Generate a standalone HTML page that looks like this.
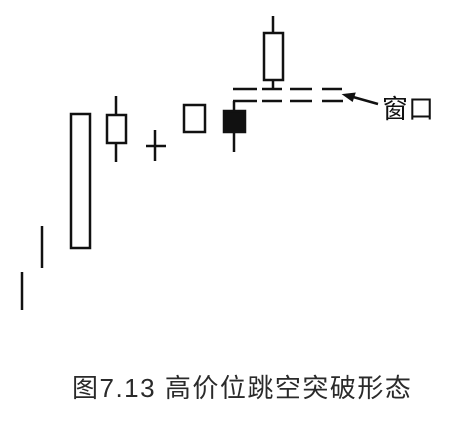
<!DOCTYPE html>
<html><head><meta charset="utf-8"><style>
html,body{margin:0;padding:0;background:#fff;width:454px;height:430px;overflow:hidden;position:relative}
.cap{position:absolute;left:72px;top:368px;font:26px "Liberation Sans","Noto Sans CJK SC",sans-serif;color:#2a2a2a;white-space:nowrap;letter-spacing:1.5px}
.lbl{position:absolute;left:382px;top:89px;font:26px "Liberation Sans","Noto Sans CJK SC",sans-serif;color:#111;white-space:nowrap}
</style></head><body>
<svg width="454" height="340" style="position:absolute;left:0;top:0" fill="none" stroke="#111" stroke-width="2.5">
<line x1="22" y1="272" x2="22" y2="310"/>
<line x1="42" y1="226" x2="42" y2="268"/>
<rect x="71" y="114" width="19" height="134"/>
<line x1="116" y1="96" x2="116" y2="162"/>
<rect x="107" y="115" width="19" height="28" fill="#fff"/>
<line x1="146" y1="146" x2="166" y2="146"/>
<line x1="155" y1="130" x2="155" y2="161"/>
<rect x="184" y="105" width="21" height="27"/>
<line x1="234" y1="101" x2="234" y2="152"/>
<rect x="224" y="111" width="21" height="21" fill="#111"/>
<line x1="273" y1="16" x2="273" y2="89"/>
<rect x="264" y="33" width="19" height="47" fill="#fff"/>
<g stroke-width="2.5">
<line x1="233" y1="89" x2="257" y2="89"/><line x1="262" y1="89" x2="282" y2="89"/><line x1="290" y1="89" x2="312" y2="89"/><line x1="322" y1="89" x2="342" y2="89"/>
<line x1="233" y1="101" x2="257" y2="101"/><line x1="262" y1="101" x2="282" y2="101"/><line x1="290" y1="101" x2="312" y2="101"/><line x1="322" y1="101" x2="343" y2="101"/>
</g>
<line x1="346" y1="95" x2="378" y2="104"/>
<path d="M345 95 L354 94 L352 100 Z" fill="#111"/>
</svg>
<div class="lbl">窗口</div>
<div class="cap">图7.13 高价位跳空突破形态</div>
</body></html>
